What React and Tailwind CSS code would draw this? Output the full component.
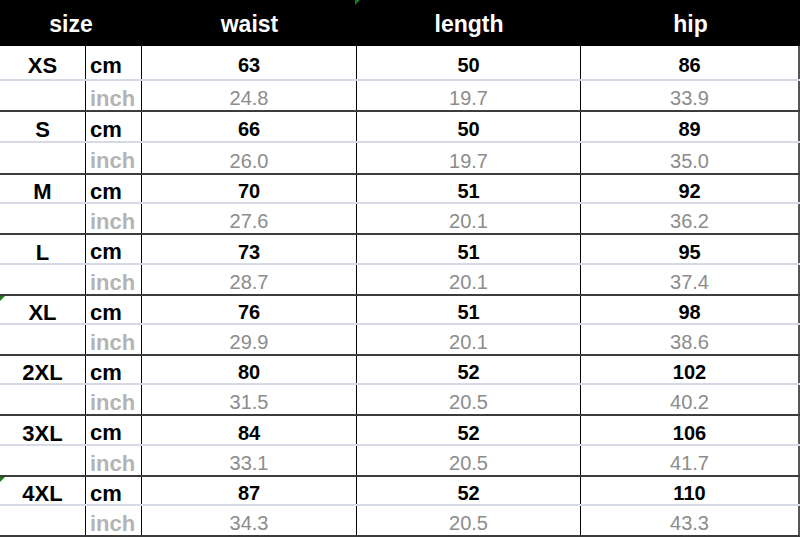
import React from 'react';

const rows = [
  { size: 'XS', cm: [63, 50, 86], inch: ['24.8', '19.7', '33.9'], h: ['h-[35px]', 'h-[29px]'] },
  { size: 'S', cm: [66, 50, 89], inch: ['26.0', '19.7', '35.0'], h: ['h-[31px]', 'h-[30px]'] },
  { size: 'M', cm: [70, 51, 92], inch: ['27.6', '20.1', '36.2'], h: ['h-[29px]', 'h-[29px]'] },
  { size: 'L', cm: [73, 51, 95], inch: ['28.7', '20.1', '37.4'], h: ['h-[30px]', 'h-[29px]'] },
  { size: 'XL', cm: [76, 51, 98], inch: ['29.9', '20.1', '38.6'], h: ['h-[29px]', 'h-[29px]'], mark: true },
  { size: '2XL', cm: [80, 52, 102], inch: ['31.5', '20.5', '40.2'], h: ['h-[29px]', 'h-[29px]'] },
  { size: '3XL', cm: [84, 52, 106], inch: ['33.1', '20.5', '41.7'], h: ['h-[30px]', 'h-[29px]'] },
  { size: '4XL', cm: [87, 52, 110], inch: ['34.3', '20.5', '43.3'], h: ['h-[29px]', 'h-[29px]'], mark: true },
];

const cols = ['w-[215px]', 'w-[224px]', 'w-[219px]'];

const Mark = () => (
  <span className="absolute left-0 top-0 w-0 h-0 border-t-[5px] border-r-[5px] border-t-[#1f7a1f] border-r-transparent" />
);

const cellLine = (i) => (i < 2 ? 'border-r border-black' : 'border-r-2 border-[#555]');

const App = () => {
  return (
    <div
      className="w-[800px] h-[538px] bg-white overflow-hidden text-black"
      style={{ fontFamily: '"Liberation Sans", Arial, sans-serif' }}
    >
      {/* Header */}
      <div className="relative flex h-[46px] bg-black text-white font-bold text-[23px] items-center pt-[3px]">
        <div className="w-[142px] text-center">size</div>
        <div className="w-[215px] text-center">waist</div>
        <div className="w-[224px] text-center">length</div>
        <div className="w-[219px] text-center">hip</div>
        <span className="absolute left-[355px] top-0 w-0 h-0 border-t-[5px] border-r-[5px] border-t-[#1f7a1f] border-r-transparent" />
      </div>

      {rows.map((r) => (
        <div key={r.size} className="relative flex flex-col border-b-2 border-[#3c3c3c]">
          {r.mark && <Mark />}
          <div className={`${r.h[0]} flex border-b-2 border-[#d6dae6]`}>
            <div className="w-[86px] h-full border-r border-black flex items-center justify-center pt-[6px] font-bold text-[22px]">
              {r.size}
            </div>
            <div className="w-[56px] h-full border-r border-black flex items-center pl-[4px] pt-[5px] font-bold text-[22px]">
              cm
            </div>
            {r.cm.map((v, i) => (
              <div
                key={i}
                className={`${cols[i]} h-full flex items-center justify-center pt-[5px] font-bold text-[20px] ${cellLine(i)}`}
              >
                {v}
              </div>
            ))}
          </div>
          <div className={`${r.h[1]} flex`}>
            <div className="w-[86px] h-full border-r border-black" />
            <div className="w-[56px] h-full border-r border-black flex items-center pl-[4px] pt-[5px] font-bold text-[22px] text-[#b4b4b4]">
              inch
            </div>
            {r.inch.map((v, i) => (
              <div
                key={i}
                className={`${cols[i]} h-full flex items-center justify-center pt-[5px] text-[20px] text-[#8c8c8c] ${cellLine(i)}`}
              >
                {v}
              </div>
            ))}
          </div>
        </div>
      ))}
    </div>
  );
};

export default App;
